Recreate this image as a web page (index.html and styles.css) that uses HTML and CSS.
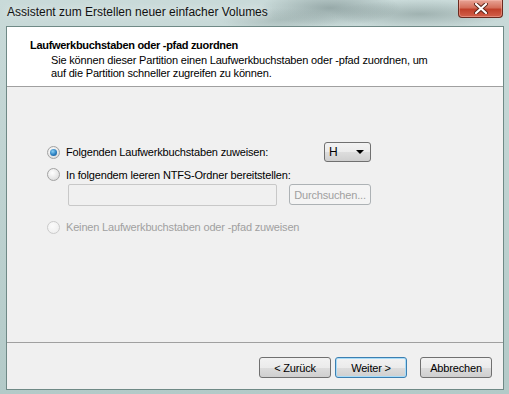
FILE: index.html
```html
<!DOCTYPE html>
<html lang="de">
<head>
    <meta charset="UTF-8">
    <title>Assistent zum Erstellen neuer einfacher Volumes</title>
    <link rel="stylesheet" href="styles.css">
</head>
<body>
    <div class="window">
        <div class="titlebar">
            <span class="title">Assistent zum Erstellen neuer einfacher Volumes</span>
            <div class="close-btn">
                <svg width="14" height="11" viewBox="0 0 14 11">
                    <path d="M2 1 L12 10 M12 1 L2 10" stroke="#5a2418" stroke-width="4" stroke-linecap="round"/>
                    <path d="M2 1 L12 10 M12 1 L2 10" stroke="#ffffff" stroke-width="2.2" stroke-linecap="round"/>
                </svg>
            </div>
        </div>

        <div class="client">
            <div class="header">
                <div class="header-title">Laufwerkbuchstaben oder -pfad zuordnen</div>
                <div class="header-text">Sie können dieser Partition einen Laufwerkbuchstaben oder -pfad zuordnen, um<br>auf die Partition schneller zugreifen zu können.</div>
            </div>

            <div class="content">
                <div class="options">
                    <div class="row row-first">
                        <span class="radio checked"></span>
                        <span class="label">Folgenden Laufwerkbuchstaben zuweisen:</span>
                        <div class="select">
                            <span>H</span>
                            <span class="arrow"></span>
                        </div>
                    </div>
                    <div class="row row-second">
                        <span class="radio"></span>
                        <span class="label">In folgendem leeren NTFS-Ordner bereitstellen:</span>
                    </div>
                    <div class="path-row">
                        <div class="textbox"></div>
                        <div class="btn disabled">Durchsuchen...</div>
                    </div>
                    <div class="row row-third">
                        <span class="radio disabled"></span>
                        <span class="label muted">Keinen Laufwerkbuchstaben oder -pfad zuweisen</span>
                    </div>
                </div>
            </div>

            <div class="footer">
                <div class="btn">&lt; Zurück</div>
                <div class="btn default">Weiter &gt;</div>
                <div class="btn cancel">Abbrechen</div>
            </div>
        </div>
    </div>
</body>
</html>
```

FILE: styles.css
```css
body {
    margin: 0;
    font-family: "Liberation Sans", Arial, sans-serif;
    font-size: 11px;
    letter-spacing: -0.17px;
    color: #000;
}
.window {
    width: 509px;
    height: 394px;
    background:
        radial-gradient(ellipse 70px 18px at 330px 8px, rgba(90, 110, 110, 0.45), transparent),
        radial-gradient(ellipse 90px 14px at 420px 14px, rgba(100, 120, 118, 0.4), transparent),
        radial-gradient(ellipse 60px 12px at 280px 20px, rgba(120, 140, 138, 0.35), transparent),
        linear-gradient(180deg, #c9dad9 0%, #b3cac8 100%);
    overflow: hidden;
}
.titlebar {
    height: 26px;
    display: flex;
    justify-content: space-between;
    align-items: flex-start;
}
.title {
    margin: 5px 0 0 7px;
    font-size: 12px;
    letter-spacing: 0;
    color: #111;
    text-shadow: 0 0 8px rgba(255, 255, 255, 0.9);
}
.close-btn {
    width: 43px;
    height: 17px;
    margin-right: 6px;
    border: 1px solid #6b2a1f;
    border-top: none;
    border-radius: 0 0 4px 4px;
    background: linear-gradient(180deg, #e8a496 0%, #d46f5b 45%, #c0402a 55%, #d2604a 100%);
    display: flex;
    justify-content: center;
    align-items: center;
    box-shadow: inset 0 0 0 1px rgba(255, 200, 190, 0.4);
}
.client {
    margin-left: 6px;
    width: 496px;
    height: 362px;
    border: 1px solid #6f8986;
    background: #f0f0f0;
    display: flex;
    flex-direction: column;
}
.header {
    height: 60px;
    flex: none;
    background: #fff;
    border-bottom: 1px solid #a0a0a0;
    box-sizing: border-box;
    padding: 11px 0 0 23px;
}
.header-title {
    font-weight: bold;
    letter-spacing: -0.3px;
    line-height: 14px;
}
.header-text {
    padding-left: 21px;
    line-height: 13px;
    margin-top: 2px;
}
.content {
    flex: 1;
    padding: 55px 0 0 40px;
}
.options {
    width: 324px;
}
.row {
    display: flex;
    align-items: center;
    gap: 6px;
}
.row-first {
    height: 20px;
}
.row-second {
    height: 15px;
    margin-top: 5px;
}
.row-third {
    height: 16px;
    margin-top: 13px;
}
.radio {
    width: 11px;
    height: 11px;
    border: 1px solid #a2a2a2;
    border-radius: 50%;
    background: radial-gradient(circle at 40% 35%, #ffffff 0%, #e6e6e6 60%, #d2d2d2 100%);
    box-sizing: content-box;
    flex: none;
    position: relative;
}
.radio.checked::after {
    content: "";
    position: absolute;
    left: 2px;
    top: 2px;
    width: 7px;
    height: 7px;
    border-radius: 50%;
    background: radial-gradient(circle at 40% 35%, #8ad0f5 0%, #2a7fc0 55%, #1a4f86 100%);
}
.radio.disabled {
    border-color: #cbcbcb;
    background: radial-gradient(circle at 40% 35%, #fbfbfb 0%, #ececec 100%);
}
.label.muted {
    color: #a0a0a0;
}
.select {
    margin-left: auto;
    width: 35px;
    height: 18px;
    border: 1px solid #707070;
    border-radius: 3px;
    background: linear-gradient(180deg, #f2f2f2 0%, #ebebeb 50%, #dddddd 51%, #cfcfcf 100%);
    display: flex;
    align-items: center;
    justify-content: space-between;
    padding: 0 6px 0 4px;
    box-sizing: content-box;
    font-size: 12px;
}
.arrow {
    width: 0;
    height: 0;
    border-left: 4px solid transparent;
    border-right: 4px solid transparent;
    border-top: 4px solid #000;
}
.path-row {
    display: flex;
    gap: 12px;
    margin-top: 2px;
    padding-left: 21px;
}
.textbox {
    width: 207px;
    height: 20px;
    border: 1px solid #c8c8c8;
    border-radius: 2px;
    background: #f0f0f0;
}
.btn {
    width: 70px;
    height: 19px;
    border: 1px solid #707070;
    border-radius: 3px;
    background: linear-gradient(180deg, #f2f2f2 0%, #ebebeb 50%, #dddddd 51%, #cfcfcf 100%);
    display: flex;
    align-items: center;
    justify-content: center;
    color: #000;
}
.path-row .btn {
    width: 80px;
}
.btn.disabled {
    border-color: #adb2b5;
    background: #f4f4f4;
    color: #a0a0a0;
}
.btn.default {
    border-color: #3c7fb1;
    box-shadow: inset 0 0 0 1px #a8dcf8;
}
.footer {
    height: 32px;
    flex: none;
    border-top: 1px solid #a0a0a0;
    display: flex;
    justify-content: flex-end;
    gap: 4px;
    padding: 14px 11px 0 0;
}
.btn.cancel {
    margin-left: 9px;
}
```
